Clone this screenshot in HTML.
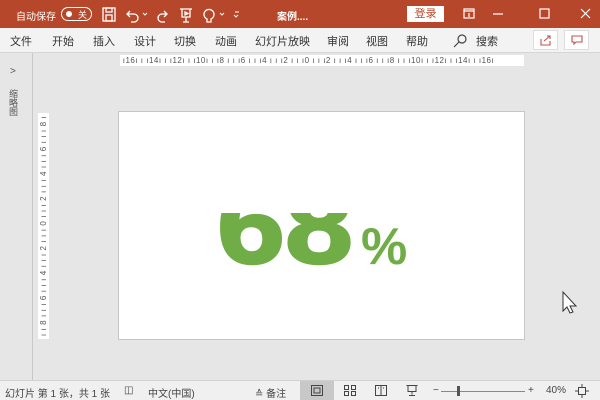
<!DOCTYPE html>
<html><head><meta charset="utf-8"><style>
*{margin:0;padding:0;box-sizing:border-box}
body{width:600px;height:400px;overflow:hidden;background:#e6e6e6;font-family:"Liberation Sans","Noto Sans CJK SC",sans-serif;position:relative;font-size:12px;color:#333}
.abs{position:absolute}
#title{left:0;top:0;width:600px;height:28px;background:#b7472a;color:#fff}
#tabs{left:0;top:28px;width:600px;height:25px;background:#f3f3f3;border-bottom:1px solid #d6d6d6}
.tab{position:absolute;top:5px;font-size:11px;color:#333}
#status{left:0;top:380px;width:600px;height:20px;background:#f0f0f0;border-top:1px solid #d0d0d0;font-size:10px;color:#444}
.st{position:absolute;top:4px}
</style></head><body>
<div id="title" class="abs">
 <div class="abs" style="left:16px;top:8px;font-size:10px">自动保存</div>
 <div class="abs" style="left:61px;top:7px;width:31px;height:14px;border:1.5px solid #fff;border-radius:7px"></div>
 <div class="abs" style="left:66px;top:11px;width:6px;height:6px;background:#fff;border-radius:50%"></div>
 <div class="abs" style="left:78px;top:8px;font-size:9px">关</div>
 <svg class="abs" style="left:100px;top:5px" width="140" height="18" fill="none" stroke="#fff" stroke-width="1.3">
  <rect x="3" y="3" width="12" height="13"/><rect x="6" y="3" width="6" height="4"/><rect x="6" y="10" width="6" height="6"/>
  <path d="M30 6 l-3 3 l3 3 M27 9 h7 a4 4 0 0 1 0 8 h-3"/><path d="M43 8 l2 2 l2-2" stroke-width="1"/>
  <path d="M64 6 l3 3 l-3 3 M67 9 h-5 a4 4 0 0 0 0 8 h3"/>
  <path d="M80 4 h12 M82 4 v8 h8 v-8 M86 12 v5 M83 17 h6 M85 7 l3 1.5 l-3 1.5z"/>
  <path d="M107 14 a5 5 0 1 1 4 0 v3 h-4z"/><path d="M120 8 l2 2 l2-2" stroke-width="1"/>
  <path d="M135 7 h4 M134 10 l2 2 l2-2" stroke-width="1"/>
 </svg>
 <div class="abs" style="left:277px;top:8px;font-size:10px;font-weight:bold">案例....</div>
 <div class="abs" style="left:407px;top:6px;width:37px;height:16px;background:#fff;color:#b7472a;font-size:11px;text-align:center;line-height:16px">登录</div>
 <svg class="abs" style="left:460px;top:6px" width="140" height="16" fill="none" stroke="#fff" stroke-width="1.2">
  <rect x="4" y="3" width="10" height="9"/><path d="M4 5 h10 M9 7 v4"/>
  <path d="M33 8 h10"/><rect x="80" y="3" width="9" height="9"/><path d="M121 3 l9 9 M130 3 l-9 9"/>
 </svg>
</div>
<div id="tabs" class="abs">
 <span class="tab" style="left:10px">文件</span><span class="tab" style="left:52px">开始</span><span class="tab" style="left:93px">插入</span><span class="tab" style="left:134px">设计</span><span class="tab" style="left:174px">切换</span><span class="tab" style="left:215px">动画</span><span class="tab" style="left:255px">幻灯片放映</span><span class="tab" style="left:327px">审阅</span><span class="tab" style="left:366px">视图</span><span class="tab" style="left:406px">帮助</span>
 <svg class="abs" style="left:452px;top:5px" width="16" height="16" fill="none" stroke="#444" stroke-width="1.2"><circle cx="10" cy="6" r="4"/><path d="M7 9 l-5 5"/></svg>
 <span class="tab" style="left:476px">搜索</span>
 <div class="abs" style="left:533px;top:2px;width:25px;height:20px;background:#fff;border:1px solid #ddd"></div>
 <div class="abs" style="left:564px;top:2px;width:25px;height:20px;background:#fff;border:1px solid #ddd"></div>
 <svg class="abs" style="left:539px;top:6px" width="14" height="12" fill="none" stroke="#c0504d" stroke-width="1.1"><path d="M2 5 v6 h9 v-4 M5 7 l6-5 M8 2 h3 v3"/></svg>
 <svg class="abs" style="left:570px;top:6px" width="14" height="12" fill="none" stroke="#c0504d" stroke-width="1.1"><path d="M2 2 h10 v6 h-6 l-2 2 v-2 h-2z"/></svg>
</div>
<div class="abs" style="left:32px;top:53px;width:1px;height:327px;background:#c8c8c8"></div>
<div class="abs" style="left:10px;top:66px;font-size:10px;color:#555">&gt;</div>
<div class="abs" style="left:9px;top:90px;font-size:9px;line-height:9px;width:10px;color:#555">缩略图</div>
<div class="abs" style="left:120px;top:55px;width:404px;height:11px;background:#fff;font-size:8px;line-height:11px;color:#555;white-space:nowrap;overflow:hidden;letter-spacing:0.5px">&nbsp;ı16ı ı ı14ı ı ı12ı ı ı10ı ı ı8 ı ı ı6 ı ı ı4 ı ı ı2 ı ı ı0 ı ı ı2 ı ı ı4 ı ı ı6 ı ı ı8 ı ı ı10ı ı ı12ı ı ı14ı ı ı16ı</div>
<div class="abs" style="left:38px;top:113px;width:11px;height:226px;background:#fff;overflow:hidden">
 <div style="position:absolute;left:0;top:0;width:226px;height:11px;transform-origin:0 0;transform:translate(0,226px) rotate(-90deg);font-size:8px;line-height:11px;color:#555;white-space:nowrap;letter-spacing:0.6px">&nbsp;ı ı 8 ı ı ı 6 ı ı ı 4 ı ı ı 2 ı ı ı 0 ı ı ı 2 ı ı ı 4 ı ı ı 6 ı ı ı 8 ı ı</div>
</div>
<div class="abs" style="left:118px;top:111px;width:407px;height:229px;background:#fff;border:1px solid #c6c6c6"></div>
<svg class="abs" style="left:118px;top:111px" width="407" height="229">
 <defs><clipPath id="c"><rect x="0" y="102" width="407" height="127"/></clipPath></defs>
 <text x="99" y="152" clip-path="url(#c)" font-family="Liberation Sans" font-weight="bold" font-size="108" fill="#70ad47" stroke="#70ad47" stroke-width="2.5" stroke-linejoin="round" textLength="136" lengthAdjust="spacingAndGlyphs">68</text>
 <text x="243" y="153" font-family="Liberation Sans" font-weight="bold" font-size="52" fill="#70ad47">%</text>
</svg>
<svg class="abs" style="left:561px;top:290px" width="18" height="26"><path d="M2 2 v19 l4-4 l3 6 l3-1 l-3-6 h6z" fill="#fff" stroke="#333" stroke-width="1"/></svg>
<div id="status" class="abs">
 <span class="st" style="left:5px">幻灯片 第 1 张，共 1 张</span>
 <span class="st" style="left:124px">◫</span>
 <span class="st" style="left:148px">中文(中国)</span>
 <span class="st" style="left:255px">≙ 备注</span>
 <div class="abs" style="left:300px;top:0;width:34px;height:19px;background:#c8c8c8"></div>
 <svg class="abs" style="left:310px;top:3px" width="14" height="13" fill="none" stroke="#444"><rect x="1.5" y="1.5" width="11" height="10"/><rect x="4" y="4" width="6" height="5"/></svg>
 <svg class="abs" style="left:343px;top:3px" width="14" height="13" fill="none" stroke="#444"><rect x="1.5" y="1.5" width="4" height="4"/><rect x="8.5" y="1.5" width="4" height="4"/><rect x="1.5" y="7.5" width="4" height="4"/><rect x="8.5" y="7.5" width="4" height="4"/></svg>
 <svg class="abs" style="left:374px;top:3px" width="14" height="13" fill="none" stroke="#444"><rect x="1.5" y="1.5" width="11" height="10"/><path d="M7 1.5 v10 M4 4 h1 M9 4 h1"/></svg>
 <svg class="abs" style="left:405px;top:3px" width="14" height="13" fill="none" stroke="#444"><path d="M1.5 1.5 h11 M3 1.5 v6 h8 v-6 M7 7.5 v3 M4 11.5 h6"/></svg>
 <span class="st" style="left:433px">−</span>
 <div class="abs" style="left:441px;top:10px;width:84px;height:1px;background:#888"></div>
 <div class="abs" style="left:457px;top:5px;width:3px;height:10px;background:#555"></div>
 <span class="st" style="left:528px">+</span>
 <span class="st" style="left:546px">40%</span>
 <svg class="abs" style="left:575px;top:3px" width="14" height="14" fill="none" stroke="#444"><rect x="3.5" y="3.5" width="7" height="7"/><path d="M7 0 v3 M7 11 v3 M0 7 h3 M11 7 h3"/></svg>
</div>
</body></html>
